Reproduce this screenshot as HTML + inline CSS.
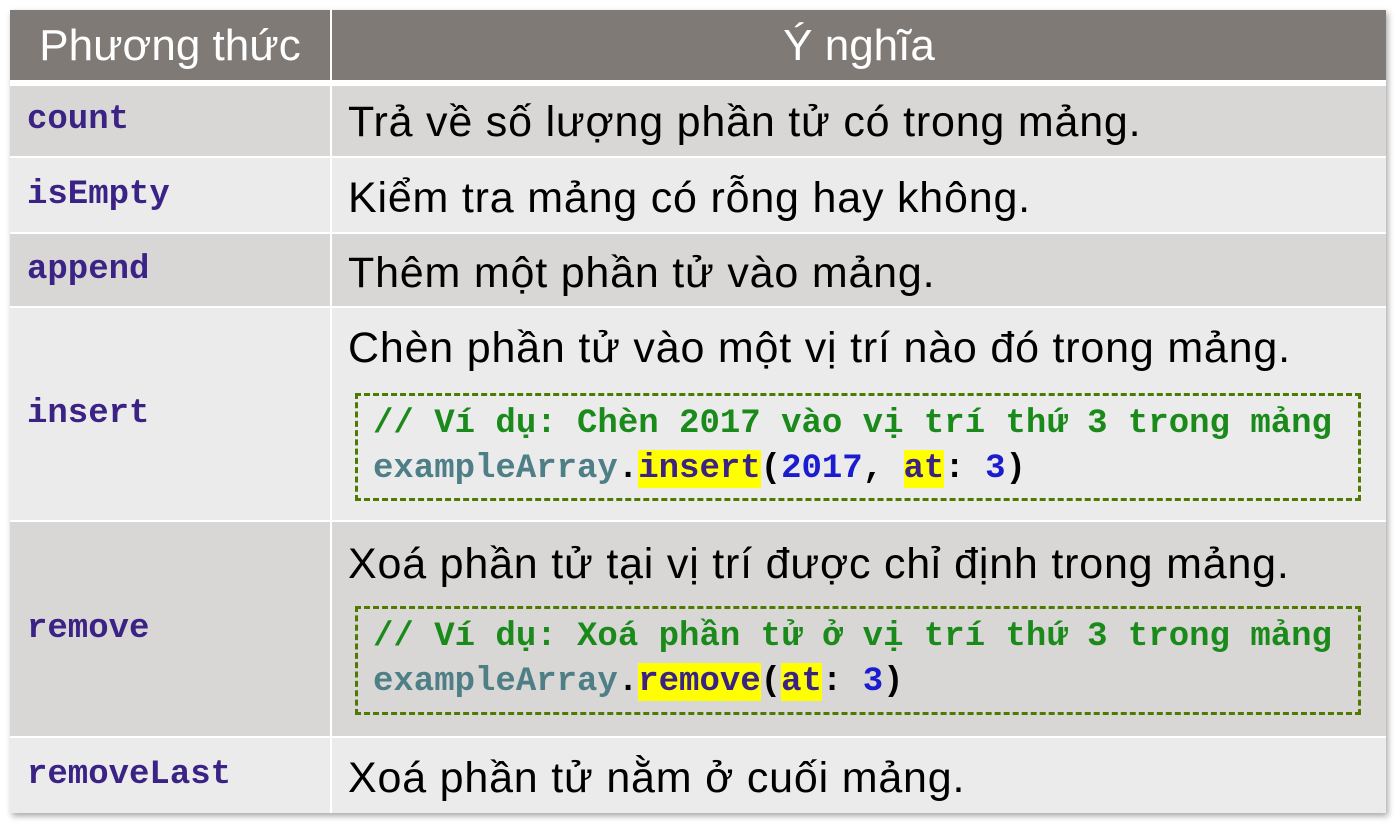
<!DOCTYPE html>
<html><head><meta charset="utf-8"><style>
body{margin:0;width:1398px;height:836px;background:#fff;position:relative;overflow:hidden;font-family:"Liberation Sans","Noto Sans CJK SC",sans-serif}
.c{position:absolute;box-sizing:border-box;white-space:nowrap}
.h{background:#7f7a76;color:#fff;font-size:44px;text-align:center;line-height:72px}
.a{background:#d9d7d5}.b{background:#ebebeb}
.m{font-family:"Liberation Mono",monospace;font-weight:bold;color:#3b2385;font-size:34px;padding-left:17px}
.d{font-size:43px;letter-spacing:0.8px;color:#000;padding-left:16px}
.box{position:absolute;left:355px;width:1006px;border:3px dashed #4f7a00;box-sizing:border-box;font-family:"Liberation Mono",monospace;font-weight:bold;font-size:34px;padding:6px 0 0 15px;line-height:45px;white-space:nowrap}
.g{color:#1a8a1a}.t{color:#4e7f86}.y{background:#ffff00;color:#3b2385}.n{color:#1b1bd0}
#sh{position:absolute;left:10px;top:10px;width:1376px;height:803px;box-shadow:2px 3px 6px rgba(0,0,0,.35)}
</style></head><body>
<div id="sh"></div>
<div class="c h" style="left:10px;top:10px;width:320px;height:70px">Phương thức</div>
<div class="c h" style="left:332px;top:10px;width:1054px;height:70px">Ý nghĩa</div>

<div class="c a m" style="left:10px;top:86px;width:320px;height:70px;line-height:68px">count</div>
<div class="c a d" style="left:332px;top:86px;width:1054px;height:70px;line-height:72px">Trả về số lượng phần tử có trong mảng.</div>

<div class="c b m" style="left:10px;top:158px;width:320px;height:74px;line-height:74px">isEmpty</div>
<div class="c b d" style="left:332px;top:158px;width:1054px;height:74px;line-height:80px">Kiểm tra mảng có rỗng hay không.</div>

<div class="c a m" style="left:10px;top:234px;width:320px;height:72px;line-height:72px">append</div>
<div class="c a d" style="left:332px;top:234px;width:1054px;height:72px;line-height:78px">Thêm một phần tử vào mảng.</div>

<div class="c b m" style="left:10px;top:308px;width:320px;height:212px;line-height:212px">insert</div>
<div class="c b d" style="left:332px;top:308px;width:1054px;height:212px;line-height:80px">Chèn phần tử vào một vị trí nào đó trong mảng.</div>
<div class="box" style="top:393px;height:108px"><span class="g">// Ví dụ: Chèn 2017 vào vị trí thứ 3 trong mảng</span><br><span class="t">exampleArray</span>.<span class="y">insert</span>(<span class="n">2017</span>, <span class="y">at</span>: <span class="n">3</span>)</div>

<div class="c a m" style="left:10px;top:522px;width:320px;height:214px;line-height:214px">remove</div>
<div class="c a d" style="left:332px;top:522px;width:1054px;height:214px;line-height:84px">Xoá phần tử tại vị trí được chỉ định trong mảng.</div>
<div class="box" style="top:606px;height:109px"><span class="g">// Ví dụ: Xoá phần tử ở vị trí thứ 3 trong mảng</span><br><span class="t">exampleArray</span>.<span class="y">remove</span>(<span class="y">at</span>: <span class="n">3</span>)</div>

<div class="c b m" style="left:10px;top:738px;width:320px;height:75px;line-height:75px">removeLast</div>
<div class="c b d" style="left:332px;top:738px;width:1054px;height:75px;line-height:80px">Xoá phần tử nằm ở cuối mảng.</div>
</body></html>
